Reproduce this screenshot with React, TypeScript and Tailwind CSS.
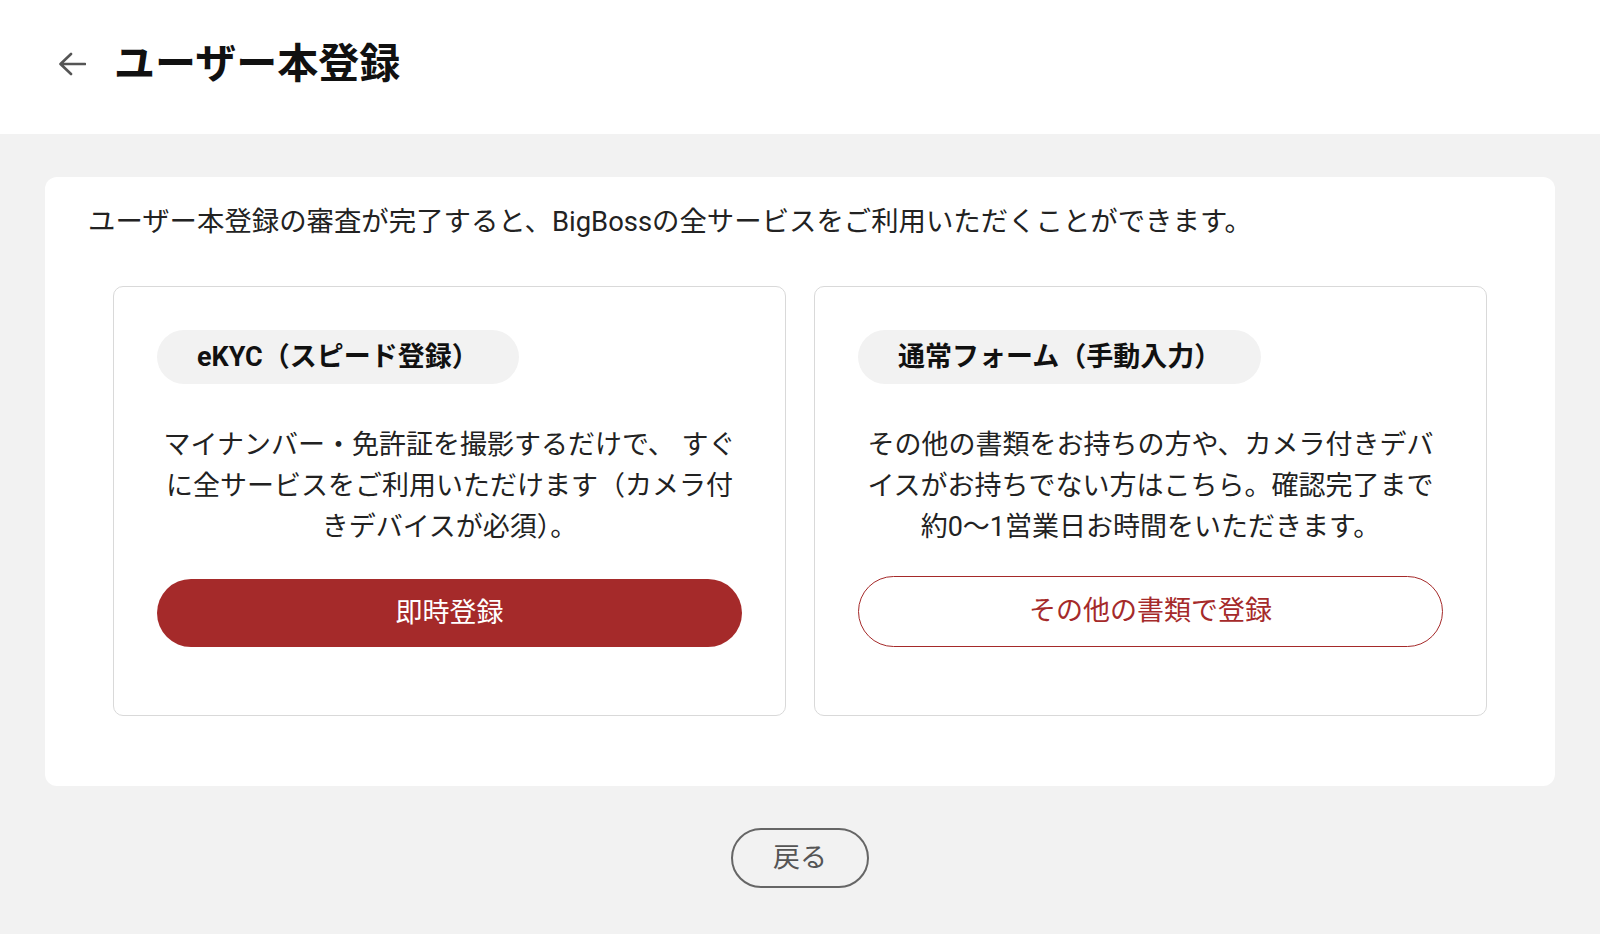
import React from "react";

type Plan = {
  id: string;
  label: string;
  description: string;
  action: string;
  primary: boolean;
};

const PLANS: Plan[] = [
  {
    id: "ekyc",
    label: "eKYC（スピード登録）",
    description:
      "マイナンバー・免許証を撮影するだけで、 すぐに全サービスをご利用いただけます（カメラ付きデバイスが必須）。",
    action: "即時登録",
    primary: true,
  },
  {
    id: "manual",
    label: "通常フォーム（手動入力）",
    description:
      "その他の書類をお持ちの方や、カメラ付きデバイスがお持ちでない方はこちら。確認完了まで約0〜1営業日お時間をいただきます。",
    action: "その他の書類で登録",
    primary: false,
  },
];

function BackArrow() {
  return (
    <svg width="28" height="24" viewBox="0 0 28 24" fill="none" className="shrink-0">
      <path
        d="M27 12H3M13 2L2.5 12L13 22"
        stroke="#555555"
        strokeWidth="2.6"
        strokeLinecap="round"
        strokeLinejoin="round"
      />
    </svg>
  );
}

function PlanCard({ plan }: { plan: Plan }) {
  return (
    <div className="flex flex-col rounded-[10px] border border-[#d9d9d9] bg-white px-[43px] pt-[43px] pb-[68px]">
      <div className="flex">
        <span className="flex h-[54px] items-center rounded-full bg-[#f2f2f2] px-[40px] text-[27px] font-bold leading-none text-[#111]">
          {plan.label}
        </span>
      </div>
      <p className="mt-[41px] text-center text-[27px] leading-[41px] text-[#222]">
        {plan.description}
      </p>
      {plan.primary ? (
        <button
          type="button"
          className="mt-[31px] flex h-[68px] w-full items-center justify-center rounded-full bg-[#a52a2a] text-[27px] text-white"
        >
          {plan.action}
        </button>
      ) : (
        <button
          type="button"
          className="mt-[28px] flex h-[71px] w-full items-center justify-center rounded-full border-[1.5px] border-[#a52a2a] bg-white text-[27px] text-[#a52a2a]"
        >
          {plan.action}
        </button>
      )}
    </div>
  );
}

export default function App() {
  return (
    <div className="min-h-screen bg-[#f2f2f2] font-['Roboto','Noto_Sans_CJK_JP',sans-serif]">
      <header className="flex h-[134px] items-center gap-[28px] bg-white pb-[6px] pl-[58px]">
        <BackArrow />
        <h1 className="text-[41px] font-bold leading-none text-[#111]">ユーザー本登録</h1>
      </header>

      <main className="px-[45px] pt-[43px] pb-[47px]">
        <section className="rounded-[12px] bg-white px-[43px] pt-[25px] pb-[70px]">
          <p className="text-[27.4px] leading-[41px] text-[#222]">
            ユーザー本登録の審査が完了すると、BigBossの全サービスをご利用いただくことができます。
          </p>
          <div className="mx-[25px] mt-[43px] grid grid-cols-2 gap-[28px]">
            {PLANS.map((plan) => (
              <PlanCard key={plan.id} plan={plan} />
            ))}
          </div>
        </section>

        <div className="mt-[42px] flex justify-center">
          <button
            type="button"
            className="flex h-[60px] w-[138px] items-center justify-center rounded-full border-2 border-[#666] text-[27px] text-[#555]"
          >
            戻る
          </button>
        </div>
      </main>
    </div>
  );
}
